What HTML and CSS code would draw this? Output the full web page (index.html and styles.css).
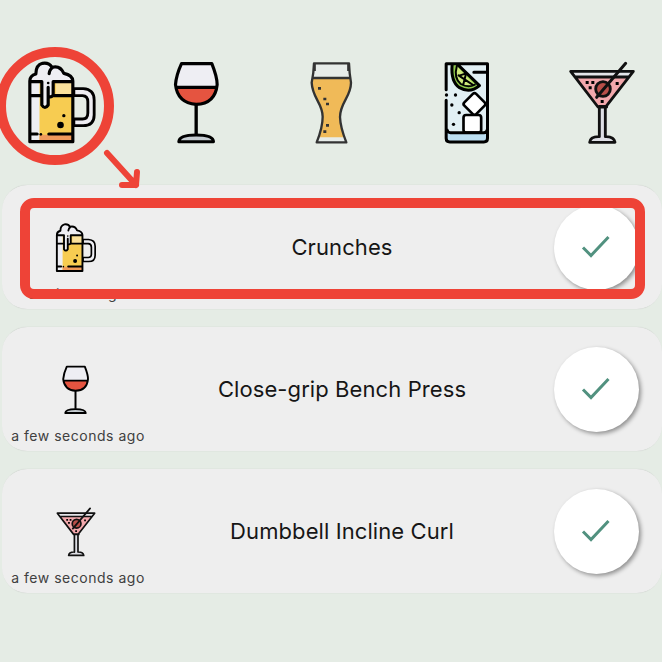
FILE: index.html
```html
<!DOCTYPE html>
<html lang="en">
<head>
<meta charset="utf-8">
<title>Exercises</title>
<link rel="stylesheet" href="styles.css">
</head>
<body>
<svg class="defs" aria-hidden="true">
  <symbol id="beer" viewBox="60.5 63 252 252">
    <path d="M222 146h28q33 2 33 34v45q0 32-33 32h-28v-20h26q16 0 16-18v-34q0-17-16-18h-26z" fill="#eeeef3" stroke="#000" stroke-width="8.500" stroke-linejoin="round"/>
    <path d="M89 126h130v179H89z" fill="#f7cc51"/>
    <path d="M91 126h28v179H91z" fill="#eeeef3"/>
    <path d="M168 128h50v38h-50z" fill="#fae19c"/>
    <path d="M119 284h100v20H119z" fill="#f09a5b"/>
    <path d="M90 125q-2-18 18-23 0-27 20-32 20-3 28 12 25-7 36 18 26 4 27 25z" fill="#eeeef3"/>
    <path d="M124 125h36v42q-7 10-14 0v28q-10 16-20 0z" fill="#eeeef3"/>
    <path d="M90 305V123q0-16 18-21 0-27 20-32 20-3 28 12 25-7 36 18 26 5 27 23v182zM148 101q1-14 12-19M90 125h36v70q9 15 19 0v-53M160 125h58M160 125v40q-5 8-13 5M90 167h35M164 167h54M90 282h22M147 282h71" fill="none" stroke="#000" stroke-width="9.500" stroke-linecap="round" stroke-linejoin="round"/>
    <circle cx="182" cy="255" r="10"/><circle cx="192" cy="227" r="5"/><circle cx="145" cy="129" r="4"/><circle cx="123" cy="283" r="4"/>
  </symbol>
  <symbol id="wine" viewBox="-14.5 33 252 252">
    <path d="M65 42h90q21 57 16 72H50Q45 97 65 42z" fill="#eeeef3"/>
    <path d="M51 114h118q-5 48-59 50-54-4-59-50z" fill="#e55440"/>
    <path d="M65 41h91q16 40 16 63-6 58-63 59-56-4-62-59 2-28 18-63zM49 112h121" fill="none" stroke="#000" stroke-width="9.500" stroke-linejoin="round"/>
    <path d="M109 163v91" stroke="#000" stroke-width="10"/>
    <path d="M57 275q1-20 52-20t52 20z" fill="#c5ccd1" stroke="#000" stroke-width="9" stroke-linejoin="round"/>
  </symbol>
  <symbol id="pint" viewBox="-13 33 252 252">
    <path d="M59 40h105q1 30 6 58c0 42-33 60-33 103q1 31 19 76H67q18-45 18-77c0-40-31-56-33-102q6-27 7-58z" fill="#e7ece9"/>
    <path d="M55 85h114c5 48-32 76-32 116q0 27 12 61H75q10-34 10-61C85 163 47 139 55 85z" fill="#f0ba58"/>
    <path d="M59 40h105q1 30 6 58c0 42-33 60-33 103q1 31 19 76H67q18-45 18-77c0-40-31-56-33-102q6-27 7-58zM56 84h111M61 43v20M162 43v20" fill="none" stroke="#333" stroke-width="7" stroke-linejoin="round"/>
    <path d="M71 111h9v8h-9zM87 143h9v8h-9zM95 158h9v8h-9zM95 222h9v8h-9zM87 241h9v8h-9z" fill="#333"/>
  </symbol>
  <symbol id="gin" viewBox="-12.5 33 252 252">
    <path d="M50 41h125v235H50z" fill="#e2f0f4"/><path d="M50 248h125v28H50z" fill="#bcdff2"/>
    <path d="M69 43Q64 95 91 113q31 18 60-6L85 43z" fill="#91ca4c"/>
    <path d="M83 48q-10 37 12 54 22 13 42 2z" fill="#cee77a"/>
    <rect x="111" y="137" width="50" height="50" rx="7" transform="rotate(45 136 162)" fill="#fff" stroke="#000" stroke-width="8"/>
    <rect x="103" y="195" width="53" height="53" rx="8" fill="#fff" stroke="#000" stroke-width="8"/>
    <path d="M51 119V41h124v224q0 11-11 11H62q-11 0-11-11V151M54 240q2 8 10 8h100q9 0 10-8M134 67h38M69 43Q64 95 91 113q31 18 60-6L85 43" fill="none" stroke="#000" stroke-width="9" stroke-linejoin="round" stroke-linecap="round"/>
    <path d="M83 48q-10 37 12 54 22 13 42 2M111 69l-9 36M88 76l41 27M111 70l-21 7" fill="none" stroke="#000" stroke-width="6" stroke-linecap="round"/>
    <circle cx="52" cy="135" r="5"/><circle cx="79" cy="135" r="5"/><circle cx="68" cy="165" r="5"/><circle cx="90" cy="188" r="5"/><circle cx="73" cy="223" r="5"/>
  </symbol>
  <symbol id="martini" viewBox="0 33 252 252">
    <path d="M32 64h188l-80 104h-28z" fill="#e4e5e9"/><path d="M47 83h158l-67 85h-24z" fill="#f3a8ac"/>
    <path d="M116 170h20v90q28-1 29 17H89q1-17 27-17z" fill="#dedfe5"/>
    <path d="M32 64h188l-80 103v4h-26zM47 81h158M118 169v91q-27-1-29 17h76q-3-18-29-17v-91z" fill="none" stroke="#111" stroke-width="8.500" stroke-linejoin="round"/>
    <circle cx="129" cy="117" r="22" fill="#b94f49" stroke="#111" stroke-width="8.500"/>
    <path d="M110 142l87-102" stroke="#111" stroke-width="9" stroke-linecap="round"/>
    <path d="M77 93h9v9h-9zM94 93h9v9h-9zM86 109h9v9h-9zM167 96h9v9h-9zM122 150h9v9h-9z"/>
  </symbol>
  <symbol id="check" viewBox="0 0 30 24"><path d="M2 12.500l8 8L27.500 2" fill="none" stroke="#51917f" stroke-width="3"/></symbol>
</svg>
<main class="screen">
  <nav class="drinks">
    <svg><use href="#beer"/></svg><svg><use href="#wine"/></svg><svg><use href="#pint"/></svg><svg><use href="#gin"/></svg><svg><use href="#martini"/></svg>
  </nav>
  <section class="list">
    <article class="card">
      <div class="side"><svg class="thumb"><use href="#beer"/></svg><p class="time time-wide">a minute ago</p></div>
      <h2 class="name">Crunches</h2>
      <button class="done" aria-label="Done"><svg class="tick"><use href="#check"/></svg></button>
    </article>
    <article class="card">
      <div class="side"><svg class="thumb"><use href="#wine"/></svg><p class="time">a few seconds ago</p></div>
      <h2 class="name">Close-grip Bench Press</h2>
      <button class="done" aria-label="Done"><svg class="tick"><use href="#check"/></svg></button>
    </article>
    <article class="card">
      <div class="side"><svg class="thumb"><use href="#martini"/></svg><p class="time">a few seconds ago</p></div>
      <h2 class="name">Dumbbell Incline Curl</h2>
      <button class="done" aria-label="Done"><svg class="tick"><use href="#check"/></svg></button>
    </article>
  </section>
  <svg class="marks" viewBox="0 0 662 662" fill="none" stroke="#ee4337" stroke-linecap="round" stroke-linejoin="round">
    <circle cx="55" cy="106" r="54" stroke-width="10"/>
    <path d="M107 153l29 32M137 172l-1 13h-14" stroke-width="6"/>
    <rect x="25" y="203" width="615" height="91" rx="9" stroke-width="10"/>
  </svg>
</main>
</body>
</html>
```
FILE: styles.css
```css
* { box-sizing: border-box; }
body { margin: 0; font-family: Inter, "Liberation Sans", sans-serif; }
.defs { position: absolute; width: 0; height: 0; }
.screen { position: relative; width: 662px; height: 662px; overflow: hidden; background: #e5ece5; }
.drinks { display: flex; gap: 51.2px; height: 185px; padding: 61px 0 0 19.5px; }
.drinks svg { flex: none; width: 84px; height: 84px; }
.list { display: flex; flex-direction: column; gap: 18px; padding-left: 2px; }
.card { display: grid; grid-template-columns: 148px 1fr 108px; align-items: center; height: 124px; border-radius: 25px; background: #eee; box-shadow: 0 1px 1px -1px rgba(0, 0, 0, .2), 0 -1px 1px -1px rgba(0, 0, 0, .2); }
.side { display: flex; flex-direction: column; align-self: start; padding-top: 38px; }
.thumb { width: 50px; height: 50px; margin-left: 48.5px; }
.time { width: 134px; margin: 11.5px 0 0 9px; text-align: center; font-size: 14px; line-height: 18px; letter-spacing: .52px; color: #404040; white-space: nowrap; }
.time-wide { letter-spacing: 1.1px; }
.name { margin: 0 0 1px -20px; text-align: center; font-size: 22px; font-weight: 400; line-height: 30px; letter-spacing: .09px; color: #161616; white-space: nowrap; }
.done { display: flex; align-items: center; justify-content: center; width: 85px; height: 85px; padding: 0 2px 0 0; border: 0; border-radius: 50%; background: #fff; box-shadow: 2px 2px 4px rgba(0, 0, 0, .4); }
.tick { width: 30px; height: 24px; }
.marks { position: absolute; inset: 0; width: 662px; height: 662px; pointer-events: none; }
```
